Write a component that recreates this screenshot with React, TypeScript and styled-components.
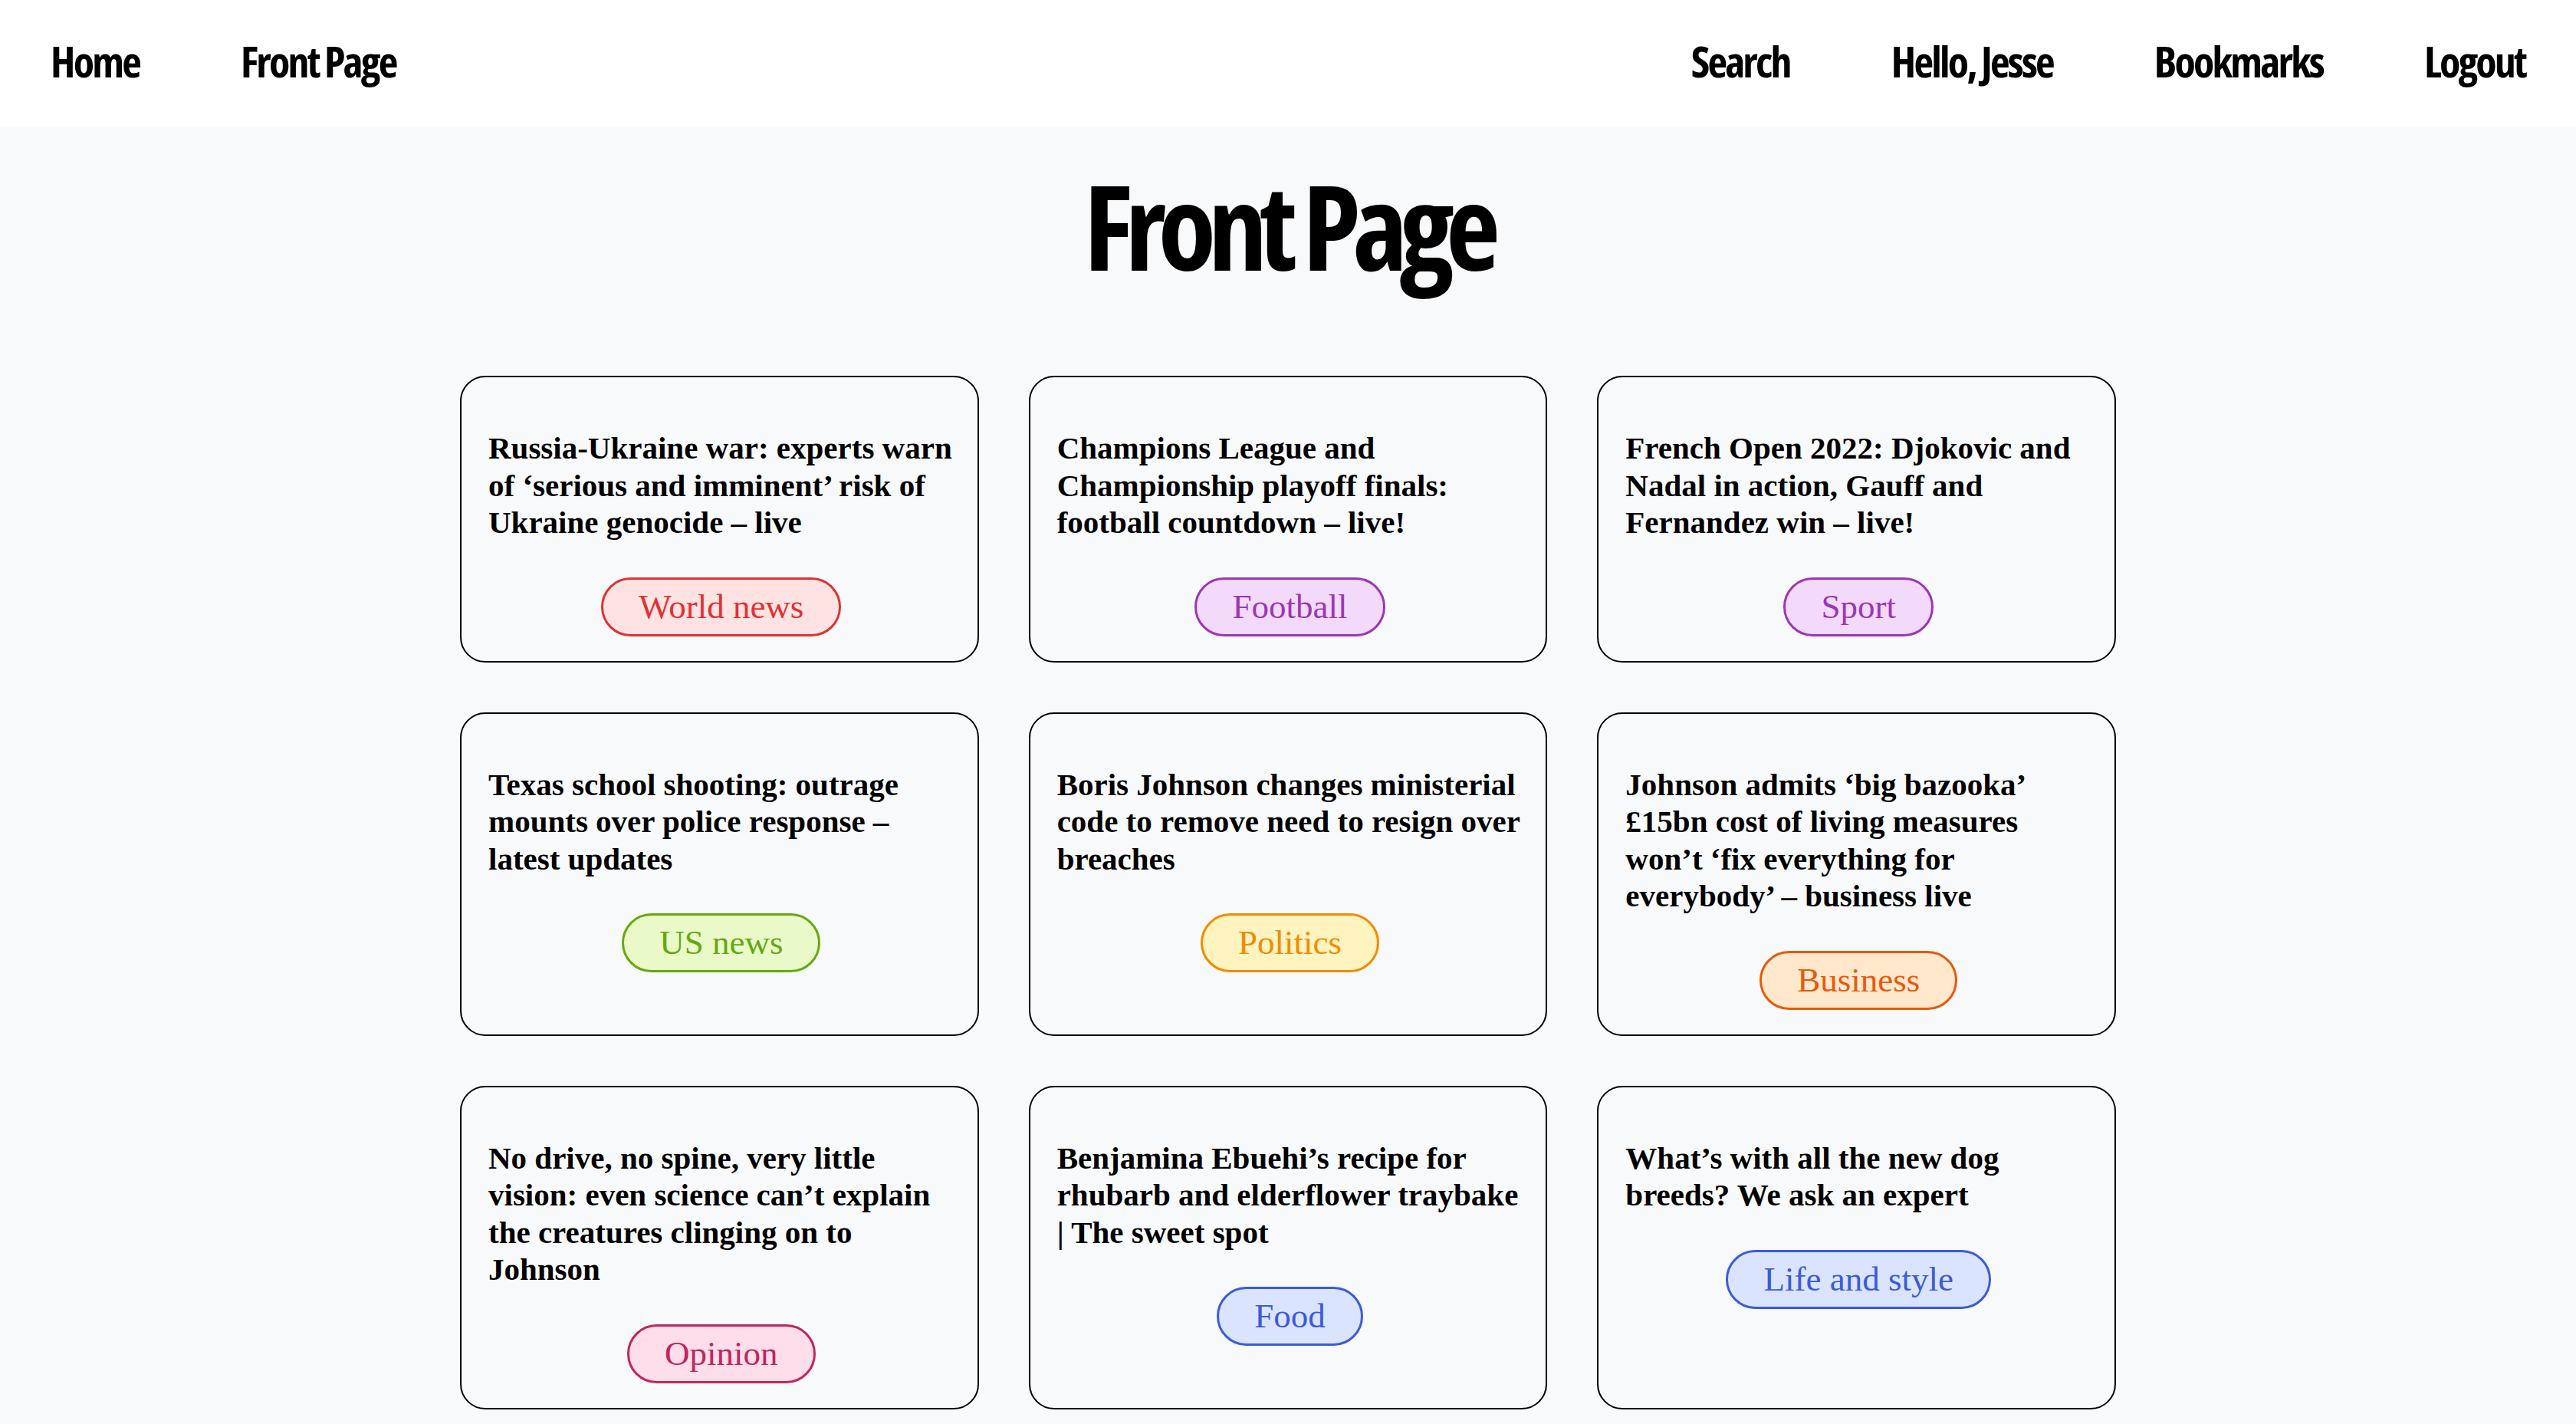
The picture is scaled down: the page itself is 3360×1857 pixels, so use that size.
import React from "react";
import styled, { createGlobalStyle } from "styled-components";

const GlobalStyle = createGlobalStyle`
  * { box-sizing: border-box; }
  html, body { margin: 0; padding: 0; }
  body {
    background: #f8f9fa;
    color: #000;
    font-family: "Liberation Serif", serif;
  }
`;

const NavBar = styled.nav`
  height: 165px;
  background: #fff;
  display: flex;
  align-items: center;
  justify-content: space-between;
  padding-bottom: 8px;
`;

const NavGroup = styled.div`
  display: flex;
  align-items: center;
`;

const NavLink = styled.a`
  padding: 0 66px;
  font-family: "Open Sans", sans-serif;
  font-stretch: 75%;
  font-weight: 700;
  font-size: 56px;
  letter-spacing: -2.8px;
  color: #000;
  text-decoration: none;
  white-space: nowrap;
  cursor: pointer;
`;

const Main = styled.main`
  display: flex;
  flex-direction: column;
  align-items: center;
  padding-bottom: 40px;
`;

const Title = styled.h1`
  margin: 50px 0 120px;
  font-family: "Open Sans", sans-serif;
  font-stretch: 75%;
  font-weight: 700;
  font-size: 155px;
  line-height: 155px;
  letter-spacing: -10.5px;
`;

const Grid = styled.section`
  width: 2160px;
  display: grid;
  grid-template-columns: repeat(3, 1fr);
  gap: 65px;
`;

const Card = styled.article`
  border: 2px solid #000;
  border-radius: 33px;
  padding: 0 30px 32px 35px;
  display: flex;
  flex-direction: column;
  align-items: flex-start;
`;

const Headline = styled.h3`
  margin: 68px 0 47px;
  font-family: "Liberation Serif", serif;
  font-weight: 700;
  font-size: 41px;
  line-height: 48.5px;
`;

type Tone = { border: string; bg: string };

const Tag = styled.span<{ $tone: Tone }>`
  align-self: center;
  display: inline-block;
  border: 3px solid ${(p) => p.$tone.border};
  background: ${(p) => p.$tone.bg};
  color: ${(p) => p.$tone.border};
  border-radius: 999px;
  padding: 13px 46px;
  font-family: "Liberation Serif", serif;
  font-size: 45px;
  line-height: 45px;
  white-space: nowrap;
`;

const tones: Record<string, Tone> = {
  red: { border: "#e03131", bg: "#ffe3e3" },
  grape: { border: "#9c36b5", bg: "#f3d9fa" },
  lime: { border: "#66a80f", bg: "#e9fac8" },
  yellow: { border: "#f08c00", bg: "#fff3bf" },
  orange: { border: "#e8590c", bg: "#ffe8cc" },
  pink: { border: "#c2255c", bg: "#ffdeeb" },
  indigo: { border: "#3b5bdb", bg: "#dbe4ff" },
};

const articles = [
  {
    title:
      "Russia-Ukraine war: experts warn of \u2018serious and imminent\u2019 risk of Ukraine genocide \u2013 live",
    section: "World news",
    tone: "red",
  },
  {
    title:
      "Champions League and Championship playoff finals: football countdown \u2013 live!",
    section: "Football",
    tone: "grape",
  },
  {
    title:
      "French Open 2022: Djokovic and Nadal in action, Gauff and Fernandez win \u2013 live!",
    section: "Sport",
    tone: "grape",
  },
  {
    title:
      "Texas school shooting: outrage mounts over police response \u2013 latest updates",
    section: "US news",
    tone: "lime",
  },
  {
    title:
      "Boris Johnson changes ministerial code to remove need to resign over breaches",
    section: "Politics",
    tone: "yellow",
  },
  {
    title:
      "Johnson admits \u2018big bazooka\u2019 \u00a315bn cost of living measures won\u2019t \u2018fix everything for everybody\u2019 \u2013 business live",
    section: "Business",
    tone: "orange",
  },
  {
    title:
      "No drive, no spine, very little vision: even science can\u2019t explain the creatures clinging on to Johnson",
    section: "Opinion",
    tone: "pink",
  },
  {
    title:
      "Benjamina Ebuehi\u2019s recipe for rhubarb and elderflower traybake | The sweet spot",
    section: "Food",
    tone: "indigo",
  },
  {
    title: "What\u2019s with all the new dog breeds? We ask an expert",
    section: "Life and style",
    tone: "indigo",
  },
];

export default function App() {
  return (
    <>
      <GlobalStyle />
      <NavBar>
        <NavGroup>
          <NavLink>Home</NavLink>
          <NavLink>Front Page</NavLink>
        </NavGroup>
        <NavGroup>
          <NavLink>Search</NavLink>
          <NavLink>Hello, Jesse</NavLink>
          <NavLink>Bookmarks</NavLink>
          <NavLink>Logout</NavLink>
        </NavGroup>
      </NavBar>
      <Main>
        <Title>Front Page</Title>
        <Grid>
          {articles.map((a) => (
            <Card key={a.title}>
              <Headline>{a.title}</Headline>
              <Tag $tone={tones[a.tone]}>{a.section}</Tag>
            </Card>
          ))}
        </Grid>
      </Main>
    </>
  );
}
